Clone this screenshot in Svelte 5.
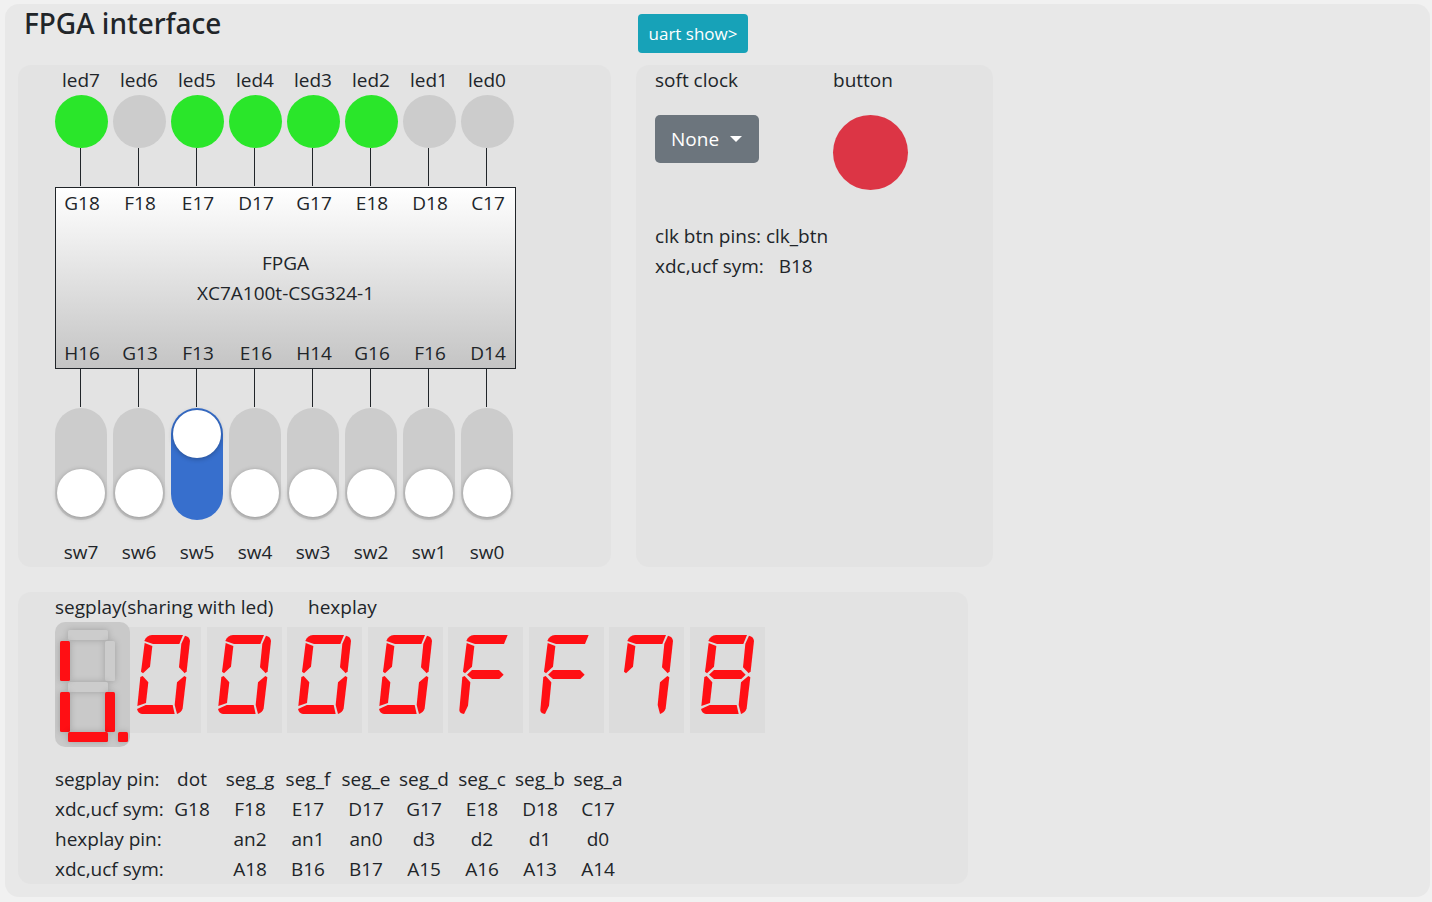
<script>
  const pins = [
    { led: 'led7', out: 'G18', inp: 'H16', sw: 'sw7', on: true },
    { led: 'led6', out: 'F18', inp: 'G13', sw: 'sw6', on: false },
    { led: 'led5', out: 'E17', inp: 'F13', sw: 'sw5', on: true },
    { led: 'led4', out: 'D17', inp: 'E16', sw: 'sw4', on: true },
    { led: 'led3', out: 'G17', inp: 'H14', sw: 'sw3', on: true },
    { led: 'led2', out: 'E18', inp: 'G16', sw: 'sw2', on: true },
    { led: 'led1', out: 'D18', inp: 'F16', sw: 'sw1', on: false },
    { led: 'led0', out: 'C17', inp: 'D14', sw: 'sw0', on: false }
  ];
  let switches = $state([false, false, true, false, false, false, false, false]);
  let clock = $state('None');

  const bars = [
    { x: 13, y: 8, w: 40, h: 10, on: false },
    { x: 50, y: 19, w: 10, h: 40, on: false },
    { x: 13, y: 60, w: 40, h: 10, on: false },
    { x: 5, y: 19, w: 10, h: 40, on: true },
    { x: 5, y: 70, w: 10, h: 40, on: true },
    { x: 50, y: 70, w: 10, h: 40, on: true },
    { x: 13, y: 110, w: 40, h: 10, on: true },
    { x: 63, y: 110, w: 10, h: 10, on: true }
  ];

  // Slanted segments; A and E are the open-ended forms used when no neighbour meets them.
  const seg = {
    a: 'M55 42Q61 26 78 24H171L160 51H81Z',
    A: 'M55 42Q61 26 78 24H179L168 51H81Z',
    b: 'M177 26Q191 29 192 42L182 133L176 139L159 121L166 50Z',
    c: 'M175 147L181 151L170 244Q167 257 153 261L146 234L153 166Z',
    d: 'M33 246L59 234H140L146 261H48Q36 259 33 246Z',
    e: 'M50 147L67 166L60 228L34 237L43 150Z',
    E: 'M50 147L67 166L60 236L48 261Q34 260 34 249L43 150Z',
    f: 'M56 48L79 57L72 119L51 139L45 134Z',
    g: 'M57 143L72 129H153L167 143L154 156H72Z'
  };
  const glyphs = { 0: 'abcdef', F: 'AEfg', 7: 'abcf', 8: 'abcdefg' };
  const digits = ['0', '0', '0', '0', 'F', 'F', '7', '8'];

  const table = [
    ['segplay pin:', 'dot', 'seg_g', 'seg_f', 'seg_e', 'seg_d', 'seg_c', 'seg_b', 'seg_a'],
    ['xdc,ucf sym:', 'G18', 'F18', 'E17', 'D17', 'G17', 'E18', 'D18', 'C17'],
    ['hexplay pin:', '', 'an2', 'an1', 'an0', 'd3', 'd2', 'd1', 'd0'],
    ['xdc,ucf sym:', '', 'A18', 'B16', 'B17', 'A15', 'A16', 'A13', 'A14']
  ];
</script>

<main class="board">
  <header class="row head">
    <h1>FPGA interface</h1>
    <div><button class="uart" type="button">uart show&gt;</button></div>
  </header>

  <div class="row">
    <section class="panel chip-panel">
      <div class="cells">{#each pins as p}<span>{p.led}</span>{/each}</div>
      <div class="cells">{#each pins as p}<i class="led" class:on={p.on}></i>{/each}</div>
      <div class="cells wires">{#each pins as p}<i class="wire"></i>{/each}</div>
      <div class="chip">
        <div class="cells">{#each pins as p}<span>{p.out}</span>{/each}</div>
        <p class="name">FPGA<br />XC7A100t-CSG324-1</p>
        <div class="cells">{#each pins as p}<span>{p.inp}</span>{/each}</div>
      </div>
      <div class="cells wires">{#each pins as p}<i class="wire"></i>{/each}</div>
      <div class="cells">
        {#each pins as p, i}
          <input id={p.sw} class="switch" type="checkbox" bind:checked={switches[i]} />
        {/each}
      </div>
      <div class="cells sw-labels">{#each pins as p}<label for={p.sw}>{p.sw}</label>{/each}</div>
    </section>

    <section class="panel clock-panel">
      <div class="controls">
        <label for="clock">soft clock</label>
        <label for="push">button</label>
        <div class="picker">
          <select id="clock" bind:value={clock}><option>None</option></select>
        </div>
        <button id="push" class="push" type="button" aria-label="button"></button>
      </div>
      <div class="btn-pins">
        <span>clk btn pins: clk_btn</span>
        <span>xdc,ucf sym:&nbsp;&nbsp; B18</span>
      </div>
    </section>
  </div>

  <section class="panel seg-panel">
    <div class="seg-head"><span class="seg-title">segplay(sharing with led)</span><span>hexplay</span></div>
    <div class="displays">
      <svg class="segplay" viewBox="0 0 75 125">
        {#each bars as b}
          <rect x={b.x} y={b.y} width={b.w} height={b.h} rx="1.5" class:lit={b.on} />
        {/each}
      </svg>
      <div class="hexplay">
        {#each digits as d}
          <svg viewBox="0 0 225 318">
            {#each glyphs[d] as s}<path d={seg[s]} />{/each}
          </svg>
        {/each}
      </div>
    </div>
    <table>
      <tbody>
        {#each table as [name, ...cells]}
          <tr><th scope="row">{name}</th>{#each cells as c}<td>{c}</td>{/each}</tr>
        {/each}
      </tbody>
    </table>
  </section>
</main>

<style>
  :global(body) {
    background: #f1f1f1;
  }
  .board {
    box-sizing: border-box;
    margin: 4px 2px 5px 5px;
    padding: 0 0 13px 13px;
    border-radius: 14px;
    background: #e8e8e8;
    color: #212529;
    font: 19px/30px 'Open Sans', 'Noto Sans', sans-serif;
    display: flow-root;
  }
  .row {
    display: grid;
    grid-template-columns: 42% 25.3%;
    column-gap: 25px;
  }
  .head {
    height: 61px;
  }
  h1 {
    margin: 0;
    padding: 0 6px;
    font-family: 'Noto Sans', 'Open Sans', sans-serif;
    font-size: 28px;
    line-height: 38px;
    font-weight: 500;
  }
  .uart {
    margin: 10px 2px;
    width: 110px;
    height: 39px;
    padding: 0;
    border: 0;
    border-radius: 4px;
    background: #17a2b8;
    color: #fff;
    font: inherit;
    font-size: 17px;
    white-space: nowrap;
  }
  .panel {
    box-sizing: border-box;
    border-radius: 13px;
    background: #e3e3e3;
  }
  .chip-panel {
    padding-left: 37px;
  }
  .cells {
    display: grid;
    grid-template-columns: repeat(8, 52px);
    column-gap: 6px;
    text-align: center;
  }
  .led {
    width: 53px;
    height: 53px;
    border-radius: 50%;
    background: #ccc;
  }
  .led.on {
    background: #2ae62a;
  }
  .wires {
    padding-bottom: 1px;
  }
  .wire {
    width: 1px;
    height: 38px;
    margin-left: 25px;
    background: #212529;
  }
  .chip {
    width: 459px;
    height: 180px;
    border: 1px solid #212529;
    background: linear-gradient(#fff, #c4c4c4);
    display: flex;
    flex-direction: column;
    justify-content: space-between;
  }
  .name {
    margin: 0;
    text-align: center;
  }
  .switch {
    appearance: none;
    box-sizing: border-box;
    width: 52px;
    height: 112px;
    margin: 0;
    padding: 2px 2px 3px;
    border-radius: 26px;
    background: #ccc;
    display: flex;
    align-items: flex-end;
  }
  .switch::before {
    content: '';
    width: 48px;
    height: 48px;
    border-radius: 50%;
    background: #fff;
    box-shadow: 0 1px 5px rgba(0, 0, 0, 0.3);
  }
  .switch:checked {
    background: #376fcd;
    align-items: flex-start;
  }
  .sw-labels {
    padding-top: 17px;
  }
  .clock-panel {
    padding-left: 19px;
  }
  .controls {
    display: grid;
    grid-template-columns: 178px 75px;
    row-gap: 20px;
  }
  .picker {
    position: relative;
    width: 104px;
    height: 48px;
  }
  .picker::after {
    content: '';
    position: absolute;
    right: 17px;
    top: 21px;
    border: 6px solid transparent;
    border-top-color: #fff;
    border-bottom: 0;
    pointer-events: none;
  }
  select {
    appearance: none;
    width: 100%;
    height: 100%;
    padding: 0 16px;
    border: 0;
    border-radius: 5px;
    background: #6c757d;
    color: #fff;
    font: inherit;
  }
  .push {
    width: 75px;
    height: 75px;
    padding: 0;
    border: 0;
    border-radius: 50%;
    background: #dc3545;
  }
  .btn-pins {
    display: grid;
    padding-top: 31px;
  }
  .seg-panel {
    width: 67.3%;
    margin-top: 25px;
    padding-left: 37px;
  }
  .seg-head {
    display: flex;
  }
  .seg-title {
    width: 253px;
  }
  .displays {
    display: flex;
    align-items: flex-start;
  }
  .segplay {
    position: relative;
    flex: none;
    width: 75px;
    height: 125px;
    border-radius: 10px;
    background: #c9c9c9;
    z-index: 1;
  }
  .segplay rect {
    fill: #ccc;
    filter: drop-shadow(0 0 3px rgba(0, 0, 0, 0.2));
  }
  .segplay rect.lit {
    fill: #ff0f14;
  }
  .hexplay {
    display: flex;
    justify-content: space-between;
    width: 639px;
    margin: 5px 0 0 -4px;
  }
  .hexplay svg {
    width: 75px;
    height: 106px;
    background: #dcdcdc;
    fill: #ff0f14;
  }
  table {
    margin-top: 17px;
    border-collapse: collapse;
    table-layout: fixed;
    width: 572px;
  }
  th {
    width: 108px;
    padding: 0;
    font-weight: 400;
    text-align: left;
    white-space: nowrap;
  }
  td {
    height: 30px;
    padding: 0;
    text-align: center;
  }
</style>
